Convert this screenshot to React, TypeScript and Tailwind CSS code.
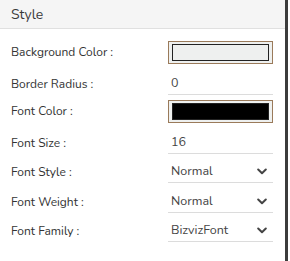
import React from "react";

const font = { fontFamily: "Nunito, Lato, 'Noto Sans', sans-serif" };

function Chevron() {
  return (
    <svg width="10" height="7" viewBox="0 0 10 7" className="mr-[6px]">
      <path d="M1.2 1.5 L5 5.2 L8.8 1.5" fill="none" stroke="#444" strokeWidth="2" strokeLinecap="round" strokeLinejoin="round" />
    </svg>
  );
}

function ColorRow({ label, fill }: { label: string; fill: string }) {
  return (
    <div className="flex h-[32px] items-center">
      <div className="w-[168px] pl-[11px] text-[12px] text-[#333]">{label}</div>
      <div className="flex h-[23px] w-[105px] items-center justify-center border border-[#9a7a5a] bg-[#eef0ef]">
        <div className="h-[17px] w-[97px] border border-[#222]" style={{ background: fill }} />
      </div>
    </div>
  );
}

function InputRow({ label, value, h, select }: { label: string; value: string; h: number; select?: boolean }) {
  return (
    <div className="flex items-end" style={{ height: h }}>
      <div className="flex h-[22px] w-[168px] items-center pl-[11px] text-[12px] text-[#333]">{label}</div>
      <div className="flex h-[22px] w-[105px] items-center justify-between border-b border-[#dcdcdc] pl-[3px] text-[12.5px] text-[#444]">
        <span>{value}</span>
        {select && <Chevron />}
      </div>
    </div>
  );
}

export default function App() {
  return (
    <div className="flex h-[261px] w-[290px] bg-white" style={font}>
      <div className="w-[285px]">
        <div className="flex h-[29px] items-center border-b border-[#e0e0e0] bg-[#f5f5f5] pl-[11px] text-[14px] text-[#3a3a3a]">
          Style
        </div>
        <div className="pt-[7px]">
          <ColorRow label="Background Color :" fill="#eef0ef" />
          <InputRow label="Border Radius :" value="0" h={27} />
          <ColorRow label="Font Color :" fill="#000" />
          <InputRow label="Font Size :" value="16" h={27} />
          <InputRow label="Font Style :" value="Normal" h={29} select />
          <InputRow label="Font Weight :" value="Normal" h={30} select />
          <InputRow label="Font Family :" value="BizvizFont" h={29} select />
        </div>
      </div>
      <div className="h-full w-[3px] bg-[#3c3c3c]" />
    </div>
  );
}
